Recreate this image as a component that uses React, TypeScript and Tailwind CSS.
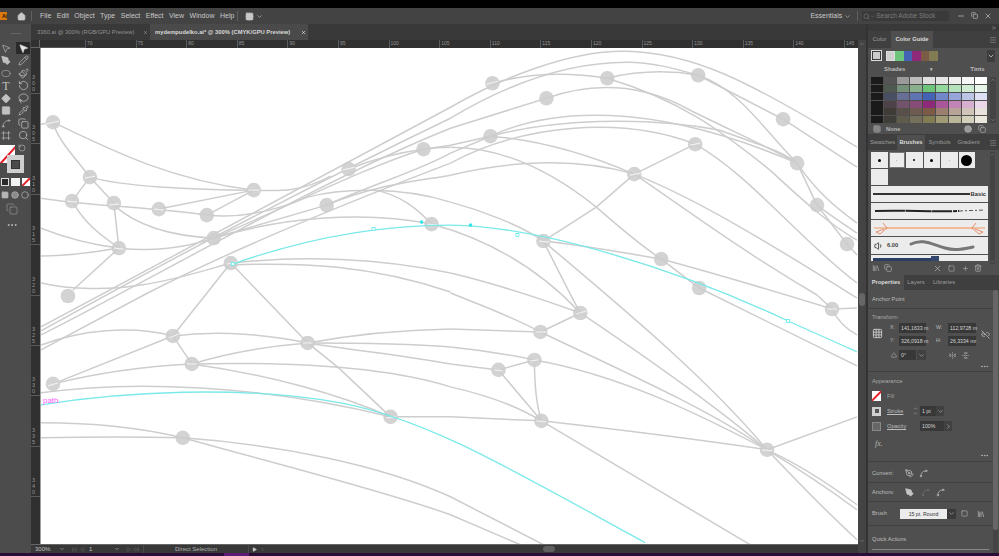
import React from 'react';
import {
  MousePointer2, PenTool, Pencil, Circle, Paintbrush, RotateCcw, Diamond, Lasso, Pipette, Spline, Copy, Frame, Search,
  Home, ChevronDown, ChevronUp, ChevronRight, Minus, X, Square, Grid2x2, Link2Off, Trash2, Plus, Library, MoreHorizontal,
  FlipHorizontal2, FlipVertical2, Triangle, SkipBack, Play, SkipForward, Volume1, Menu, ChevronsRight, Grid3x3,
} from 'lucide-react';

const menus = ['File', 'Edit', 'Object', 'Type', 'Select', 'Effect', 'View', 'Window', 'Help'];
const hRuler = ['70', '75', '80', '85', '90', '95', '100', '105', '110', '115', '120', '125', '130', '135', '140', '145'];
const vRuler = ['300', '305', '310', '315', '320', '325', '330', '335', '340'];

const tools = [
  [MousePointer2, MousePointer2],
  [PenTool, Pencil],
  [Circle, Paintbrush],
  [null, RotateCcw],
  [Diamond, Lasso],
  [Square, Pipette],
  [Spline, Copy],
  [Frame, Search],
];

const guideGrid = [
  ['#1a1a1a', '#555555', '#9a9a9a', '#bcbcbc', '#e0e0e0', '#e6e6e6', '#eeeeee', '#f6f6f6', '#ffffff'],
  ['#1a1a1a', '#4e5a50', '#75907a', '#88b18c', '#6cc57a', '#94d79d', '#b4e2ba', '#d0edd4', '#e8f6ea'],
  ['#1a1a1a', '#494f63', '#686f94', '#5f74b0', '#4463b5', '#7187c9', '#98a5d8', '#bcc5e6', '#dde1f3'],
  ['#1a1a1a', '#4c4248', '#73536c', '#874d78', '#8f2a7b', '#a9569a', '#c184b6', '#d7b0d1', '#ead7e8'],
  ['#1a1a1a', '#3f3b37', '#5a504b', '#6e5b4f', '#7b5a46', '#9b8070', '#b8a496', '#d1c4ba', '#e9e1dc'],
  ['#1a1a1a', '#3f3d37', '#5f5c4e', '#74705a', '#827c52', '#a09a75', '#bab69a', '#d3d0bc', '#eae8dc'],
];
const harmony = ['#6cc57a', '#4463b5', '#8f2a7b', '#7b5a46', '#827c52'];
const brushDots = [3, 1, 2, 3, 1, 11];

// node centres in page coordinates, the artwork svg is viewBoxed to match
const nodes = [
  [52, 122], [89, 177], [71, 201], [113, 203], [158, 209], [206, 215], [253, 190], [348, 169], [423, 149], [326, 205],
  [213, 238], [118, 248], [230, 263], [431, 224], [67, 296], [492, 83], [546, 98], [607, 78], [698, 75], [783, 119],
  [797, 163], [817, 205], [847, 244], [490, 136], [695, 144], [634, 174], [543, 241], [661, 259], [699, 288], [172, 336],
  [307, 343], [191, 364], [52, 384], [182, 438], [390, 417], [580, 313], [540, 332], [534, 360], [498, 370], [541, 421],
  [767, 450], [832, 309],
];

const edges = [
  // left cluster
  'M40,124 L52,122', 'M52,122 C110,150 170,180 253,190', 'M52,122 C57,140 72,155 89,177',
  'M89,177 C120,186 190,190 253,190', 'M89,177 L71,201', 'M89,177 L113,203',
  'M40,198 C90,206 150,207 206,215 C225,217 260,217 307,197 C340,188 400,186 450,202',
  'M158,209 L253,190', 'M206,215 L253,190', 'M253,190 C280,191 300,192 330,176',
  'M71,201 C85,225 100,235 118,248', 'M113,203 L118,248', 'M113,205 C135,225 170,236 213,238',
  'M40,228 C65,238 95,245 118,248', 'M40,256 C70,256 95,252 118,248', 'M118,248 C150,252 185,248 213,238',
  'M118,248 L72,290', 'M40,283 C70,290 110,290 140,285 C175,280 205,270 230,263',
  // bundle rising to the right
  'M40,327 L450,107 C500,78 570,50 625,51 C690,52 745,78 857,147',
  'M40,331 C150,270 300,190 450,118 C500,88 560,62 627,62 C655,62 680,70 698,75',
  'M40,335 C150,280 320,180 450,128 L546,98', 'M40,350 L143,295 C230,250 340,205 450,163',
  'M213,238 C290,205 370,165 423,149 L450,145 L490,136', 'M213,238 L326,205 C370,185 420,170 450,153 L490,136',
  'M348,169 C375,158 400,152 423,149 C435,147 445,147 450,147', 'M213,238 C280,218 360,210 431,224',
  'M373,190 C400,194 418,210 431,224', 'M326,205 C370,186 410,182 450,175', 'M450,175 C500,163 570,155 634,174',
  'M492,83 C530,72 570,72 607,78', 'M607,78 C640,70 670,70 698,75',
  // top right sweep
  'M546,98 C590,82 640,82 690,110 C730,130 765,145 797,163', 'M607,78 C680,100 720,130 770,170 C800,198 830,225 857,240',
  'M698,75 C740,90 760,125 797,163', 'M698,75 L783,119 L857,167', 'M490,136 C550,108 650,100 797,163',
  'M490,136 C550,120 640,115 720,130 C760,145 780,150 797,163', 'M490,136 C540,140 590,155 634,174',
  'M450,163 C520,125 620,115 695,144', 'M634,174 L695,144', 'M634,174 L596,207 L543,241',
  'M450,147 C500,147 550,170 596,207 C620,228 640,245 661,259', 'M695,144 C750,175 800,240 857,283',
  'M634,174 C700,200 780,250 857,298', 'M634,174 C680,205 740,250 817,295 L832,309',
  'M797,163 L817,205 L847,244', 'M797,163 C815,190 835,207 857,223', 'M817,205 C830,215 845,225 857,233',
  'M847,244 L857,255', 'M832,309 L857,308', 'M832,309 C838,322 848,330 857,335',
  'M543,241 C580,245 620,252 661,259', 'M661,259 C720,275 780,293 832,309', 'M661,259 L699,288 L857,366',
  // middle
  'M450,202 C480,210 520,225 543,241', 'M431,224 C490,240 540,270 580,313', 'M450,273 C480,280 530,295 580,313',
  'M450,293 C480,305 515,318 540,332', 'M543,241 C555,265 570,295 580,313', 'M543,241 C600,290 700,370 767,450',
  'M580,313 L540,332', 'M580,313 C650,360 720,410 767,450', 'M540,332 C620,370 710,410 767,450', 'M450,329 L540,332',
  'M450,347 C480,350 510,355 534,360', 'M450,364 L498,370', 'M498,370 L534,360', 'M534,360 C534,380 536,405 541,421',
  'M498,370 L541,421', 'M450,387 C485,395 515,405 541,421', 'M450,417 L541,421', 'M541,421 C620,430 700,440 767,450',
  'M534,360 C620,375 700,415 767,450', 'M541,421 L750,545', 'M767,450 L857,417', 'M767,450 C800,465 830,485 857,505',
  'M767,450 C800,470 830,490 857,510', 'M767,450 C800,485 830,515 857,540',
  // lower left
  'M40,345 C80,330 130,325 172,336', 'M52,384 L172,336', 'M172,336 L230,263', 'M172,336 L191,364',
  'M172,336 C220,330 270,335 307,343', 'M191,364 C230,352 270,346 307,343', 'M230,263 L307,343 L338,368 L390,417',
  'M52,384 C100,372 150,366 191,364', 'M40,393 C130,380 260,385 390,417', 'M191,364 C280,362 380,365 450,387',
  'M191,364 C270,375 340,395 390,417', 'M307,343 C350,335 400,330 450,329', 'M307,343 C350,343 400,343 450,347',
  'M307,343 C350,350 400,355 450,364', 'M390,417 L450,417', 'M232,263 C300,255 380,258 450,273',
  'M232,265 C300,262 370,265 450,292', 'M40,423 C90,423 140,428 182,438', 'M40,438 C90,437 140,437 182,438',
  'M182,438 C280,445 380,465 450,497 L543,545', 'M182,438 C260,460 380,490 450,515 L520,545',
];

// faint bright slivers where strokes pass through a node
const glints = [
  'M44,124 L58,121', 'M84,178 L94,176', 'M66,201 L76,202', 'M108,205 L118,204', 'M153,209 L163,210', 'M247,190 L259,190',
  'M342,170 L354,167', 'M113,248 L123,249', 'M226,264 L236,262', 'M427,224 L437,225', 'M486,84 L498,81', 'M630,175 L640,173',
  'M690,145 L700,143', 'M539,241 L549,242', 'M168,338 L178,334', 'M302,343 L312,343', 'M186,364 L196,364', 'M47,386 L57,383',
  'M386,418 L396,417', 'M576,314 L586,311', 'M535,332 L546,332', 'M530,361 L538,360', 'M494,370 L502,371', 'M536,421 L546,422',
  'M762,450 L772,451', 'M827,309 L837,309',
];

const Artwork = () => (
  <svg className="w-full h-full block" viewBox="40 48 818 496">
    {nodes.map(([x, y]) => (
      <circle key={`${x}-${y}`} cx={x} cy={y} r={7.3} fill="#d3d3d3" />
    ))}
    {edges.map((d) => (
      <path key={d} d={d} fill="none" stroke="#cdcdcd" strokeWidth={1.5} />
    ))}
    {glints.map((d) => (
      <path key={d} d={d} fill="none" stroke="#f0f0f0" strokeWidth={1.2} />
    ))}
    <path d="M232,264 C300,240 370,225 450,225 C540,226 680,270 788,321 C815,333 835,342 857,352" fill="none" stroke="#7be9e9" strokeWidth={1.3} />
    <path d="M40,405 C120,392 240,385 340,403 C430,420 520,475 645,543" fill="none" stroke="#7be9e9" strokeWidth={1.3} />
    {[[232, 264], [373, 229], [517, 235], [788, 321]].map(([x, y]) => (
      <rect key={x} x={x - 1.5} y={y - 1.5} width={3} height={3} fill="#fff" stroke="#5fe9e9" strokeWidth={0.8} />
    ))}
    <circle cx={421} cy={222} r={1.8} fill="#35e6e6" />
    <circle cx={470} cy={225} r={1.8} fill="#35e6e6" />
    <text x={42} y={403} fontSize={8} fill="#ff5cff" fontFamily="Liberation Sans, sans-serif">path</text>
  </svg>
);

const PanelTab = ({ label, active, w }: { label: string; active?: boolean; w: string }) => (
  <div className={`${w} h-full flex items-center justify-center text-[5.8px] ${active ? 'bg-[#4f4f4f] text-[#dcdcdc] font-bold' : 'text-[#9c9c9c]'}`}>
    {label}
  </div>
);

const Field = ({ value, w }: { value: string; w: string }) => (
  <div className={`${w} h-[10px] bg-[#383838] text-[#d6d6d6] text-[5.2px] leading-[10px] pl-[2px] whitespace-nowrap`}>{value}</div>
);

const Toolbar = () => (
  <div className="w-[31px] shrink-0 bg-[#4c4c4c] flex flex-col items-center relative">
    <div className="h-[19px] w-full flex justify-center pt-[9px]">
      <div className="w-[10px] h-[1px] bg-[#666666]" />
    </div>
    <div className="flex flex-col gap-[2.5px] w-full">
      {tools.map(([Left, Right], i) => (
        <div key={i} className="flex h-[10px] pl-[1px] gap-[5px] items-center">
          <div className="w-[10px] flex justify-center text-[#c0c0c0]">
            {Left ? (
              <Left size={11} strokeWidth={1.5} fill={i === 1 || i === 4 || i === 5 ? '#c0c0c0' : 'none'} className={i === 2 ? 'scale-y-75' : ''} />
            ) : (
              <span className="text-[12px] leading-[10px] font-['Liberation_Serif',serif]">T</span>
            )}
          </div>
          <div className={`w-[14px] h-[12px] flex justify-center items-center text-[#c8c8c8] ${i === 0 ? 'bg-[#2a2a2a] rounded-[1px]' : ''}`}>
            <Right size={11} strokeWidth={1.5} fill={i === 0 ? '#e8e8e8' : 'none'} />
          </div>
        </div>
      ))}
    </div>
    <div className="absolute left-0 top-[121px] w-[15px] h-[18px] bg-white overflow-hidden">
      <div className="absolute left-[-4px] top-[8px] w-[26px] h-[1.5px] bg-[#e8202a] -rotate-[48deg]" />
    </div>
    <div className="absolute left-[7px] top-[131px] w-[17px] h-[18px] bg-[#cfcfcf] flex items-center justify-center">
      <div className="w-[9px] h-[9px] bg-[#4c4c4c] border border-[#333]" />
    </div>
    <div className="absolute left-[18px] top-[120px] text-[#c8c8c8]">
      <RotateCcw size={8} strokeWidth={1.6} />
    </div>
    <div className="absolute left-[1px] top-[154px] flex gap-[1px]">
      <div className="w-[8px] h-[8px] bg-[#2b2b2b] border border-[#ddd]" />
      <div className="w-[9px] h-[8px] bg-[#f2f2f2] ml-[1px]" />
      <div className="w-[8px] h-[8px] bg-white relative overflow-hidden ml-[1px]">
        <div className="absolute left-[-2px] top-[3px] w-[12px] h-[1.5px] bg-[#e8202a] -rotate-45" />
      </div>
    </div>
    <div className="absolute left-[1px] top-[167px] flex gap-[2px] text-[#b5b5b5]">
      <Square size={8} fill="#b5b5b5" />
      <Circle size={8} fill="#8a8a8a" />
      <Circle size={8} />
    </div>
    <div className="absolute left-[6px] top-[179px] text-[#a0a0a0]">
      <Copy size={12} strokeWidth={1.2} />
    </div>
    <div className="absolute left-[6px] top-[195px] text-[#bcbcbc]">
      <MoreHorizontal size={12} />
    </div>
  </div>
);

const RightPanel = () => (
  <div className="w-[133px] shrink-0 flex bg-[#3d3d3d]">
    <div className="w-[2px] bg-[#333333]" />
    <div className="w-[131px] flex flex-col text-[#b8b8b8]">
      {/* dock header */}
      <div className="h-[7px] bg-[#393939] flex justify-end items-center pr-[2px] text-[#b0b0b0]">
        <ChevronsRight size={6} />
      </div>

      {/* colour guide */}
      <div className="h-[17px] flex items-center bg-[#3f3f3f]">
        <PanelTab label="Color" w="w-[23px]" />
        <PanelTab label="Color Guide" active w="w-[42px]" />
        <div className="flex-1 flex justify-end pr-[2px] text-[#8c8c8c]"><Menu size={8} /></div>
      </div>
      <div className="h-[86px] bg-[#4f4f4f] px-[3px] flex flex-col">
        <div className="flex items-center gap-[4px] h-[14px] mt-[1px]">
          <div className="w-[11px] h-[11px] border border-[#ddd] bg-[#3d3d3d] flex items-center justify-center">
            <div className="w-[7px] h-[7px] bg-[#ccc]" />
          </div>
          <div className="flex h-[10px] rounded-[2px] bg-[#3d3d3d]">
            <div className="w-[9px] border border-[#ddd] bg-[#cfcfcf]" />
            {harmony.map((c) => (
              <div key={c} className="w-[8.5px]" style={{ background: c }} />
            ))}
          </div>
          <div className="ml-auto mr-[1px] text-[#ddd] bg-[#3d3d3d] w-[8px] h-[12px] flex items-center"><ChevronDown size={8} /></div>
        </div>
        <div className="flex h-[14px] items-center text-[6px] font-bold text-[#bcbcbc]">
          <span className="ml-[13px]">Shades</span>
          <span className="ml-[25px] text-[5px]">▾</span>
          <span className="ml-[37px]">Tints</span>
        </div>
        <div className="flex gap-[2px] mt-[1px]">
          <div className="grid grid-cols-9 w-[118px] gap-y-[0.5px]">
            {guideGrid.flat().map((c, i) => (
              <div key={i} className="h-[7.2px] mr-[1px]" style={{ background: c }} />
            ))}
          </div>
          <div className="w-[6px] h-[46px] bg-[#444444] flex flex-col justify-between items-center text-[#999]">
            <ChevronUp size={6} />
            <ChevronDown size={6} />
          </div>
        </div>
        <div className="flex items-center h-[10px] mt-[1px] text-[5.8px] text-[#b4b4b4]">
          <Grid3x3 size={8} className="ml-[2px]" />
          <span className="ml-[5px] font-bold">None</span>
          <Circle size={8} fill="#999" className="ml-[63px]" />
          <Copy size={8} className="ml-[6px]" />
        </div>
      </div>

      {/* brushes */}
      <div className="h-[15px] flex items-center bg-[#3f3f3f] mt-[1px]">
        <PanelTab label="Swatches" w="w-[29px]" />
        <PanelTab label="Brushes" active w="w-[28px]" />
        <PanelTab label="Symbols" w="w-[29px]" />
        <PanelTab label="Gradient" w="w-[29px]" />
        <div className="flex-1 flex justify-end pr-[2px] text-[#8c8c8c]"><Menu size={8} /></div>
      </div>
      <div className="h-[125px] bg-[#4f4f4f] pl-[3px] flex relative">
        <div className="flex flex-col w-[118px]">
          <div className="flex gap-[1px] mt-[2px]">
            {brushDots.map((d, i) => (
              <div key={i} className={`w-[16.5px] h-[16px] shrink-0 bg-[#ececec] flex items-center justify-center ${i === 1 ? 'outline outline-1 outline-[#777] -outline-offset-1' : ''}`}>
                <div className="rounded-full bg-black" style={{ width: d, height: d, opacity: d === 1 ? 0.3 : 1 }} />
              </div>
            ))}
          </div>
          <div className="w-[16.5px] h-[16px] bg-[#ececec] mt-[1px]" />
          <div className="w-[117px] mt-[1px] flex flex-col gap-[1px]">
            <div className="h-[16px] bg-[#ececec] flex items-center px-[2px] gap-[1px]">
              <div className="flex-1 h-[1.5px] bg-[#333]" />
              <span className="text-[5.8px] text-[#333] font-bold">Basic</span>
            </div>
            <div className="h-[16px] bg-[#ececec] flex items-center">
              <svg width="117" height="16"><path d="M4,8 C30,7 60,9 88,8" stroke="#222" strokeWidth="2" strokeDasharray="30 0.5 26 0.5 20 1 4 1" fill="none" /><path d="M88,8 L114,7" stroke="#555" strokeWidth="1" strokeDasharray="4 2 2 2" fill="none" /></svg>
            </div>
            <div className="h-[16px] bg-[#ececec]">
              <svg width="117" height="16"><path d="M3,8 L114,8" stroke="#eb9a63" strokeWidth="1" fill="none" /><path d="M16,8 L102,8" stroke="#f3b996" strokeWidth="2.2" fill="none" /><path d="M12,3 L16,8 L9,14 L5,12 L13,9 M105,3 L101,8 L108,14 L112,12 L104,9" stroke="#e8764a" strokeWidth="0.8" fill="none" /></svg>
            </div>
            <div className="h-[17px] bg-[#ececec] flex items-center pl-[3px] text-[#333]">
              <Volume1 size={10} />
              <span className="text-[5.8px] font-bold ml-[3px] text-[#444]">6.00</span>
              <svg width="70" height="16" className="ml-[9px]"><path d="M4,6 C16,0 26,7 38,10 C48,13 56,11 66,9" stroke="#777" strokeWidth="3" strokeLinecap="round" fill="none" /></svg>
            </div>
            <div className="h-[6px] bg-[#ececec] flex items-end">
              <div className="w-[58px] h-[3px] ml-[2px] bg-[#2c3f63]" />
              <div className="w-[8px] h-[5px] bg-[#33476d]" />
            </div>
          </div>
          <div className="flex items-center h-[10px] mt-[2px] text-[#b0b0b0]">
            <Library size={8} className="ml-[1px]" />
            <Copy size={8} className="ml-[4px]" />
            <X size={9} className="ml-[41px]" />
            <Square size={7} className="ml-[6px]" />
            <Plus size={7} className="ml-[7px]" />
            <Trash2 size={8} className="ml-[5px]" />
          </div>
        </div>
        <div className="w-[5px] h-[112px] mt-[2px] ml-[1px] bg-[#444444] flex flex-col items-center justify-between text-[#999]">
          <ChevronUp size={5} />
          <ChevronDown size={5} />
        </div>
      </div>

      {/* properties */}
      <div className="h-[15px] flex items-center bg-[#3f3f3f]">
        <PanelTab label="Properties" active w="w-[36px]" />
        <PanelTab label="Layers" w="w-[24px]" />
        <PanelTab label="Libraries" w="w-[32px]" />
      </div>
      <div className="flex-1 bg-[#4f4f4f] flex relative overflow-hidden">
        <div className="flex-1 flex flex-col text-[5.7px] text-[#bcbcbc]">
          <div className="h-[19px] flex items-center pl-[4px] border-b border-[#414141]">Anchor Point</div>
          <div className="h-[63px] border-b border-[#414141] px-[4px] relative">
            <div className="pt-[4px] h-[14px] text-[#a8a8a8]">Transform</div>
            <div className="flex">
              <div className="w-[11px] h-[11px] mt-[5px] text-[#ccc]"><Grid3x3 size={11} /></div>
              <div className="ml-[7px] flex flex-col gap-[3px]">
                <div className="flex items-center gap-[1px]"><span className="w-[8px] text-[5.2px]">X:</span><Field value="141,1633 m" w="w-[27px]" /><span className="w-[11px] ml-[9px] text-[5.2px]">W:</span><Field value="112,9728 m" w="w-[28px]" /></div>
                <div className="flex items-center gap-[1px]"><span className="w-[8px] text-[5.2px]">Y:</span><Field value="326,0918 m" w="w-[27px]" /><span className="w-[11px] ml-[9px] text-[5.2px]">H:</span><Field value="26,3334 mr" w="w-[28px]" /></div>
                <div className="flex items-center gap-[1px] mt-[1px]">
                  <Triangle size={6} className="ml-[1px] mr-[1px]" /><Field value="0°" w="w-[17px]" />
                  <div className="w-[9px] h-[10px] bg-[#414141] flex items-center justify-center"><ChevronDown size={7} /></div>
                  <FlipHorizontal2 size={7} className="ml-[22px]" /><FlipVertical2 size={7} className="ml-[5px]" />
                </div>
              </div>
            </div>
            <Link2Off size={9} className="absolute left-[113px] top-[21px]" />
            <MoreHorizontal size={9} className="absolute left-[112px] top-[53px]" />
          </div>
          <div className="h-[90px] border-b border-[#414141] px-[4px] relative">
            <div className="pt-[5px] h-[14px] text-[#a8a8a8]">Appearance</div>
            <div className="flex items-center h-[10px] mt-[5px]">
              <div className="w-[9px] h-[10px] bg-white relative overflow-hidden"><div className="absolute left-[-3px] top-[4px] w-[15px] h-[1.5px] bg-[#e8202a] -rotate-45" /></div>
              <span className="ml-[6px] text-[#a0a0a0]">Fill</span>
            </div>
            <div className="flex items-center h-[10px] mt-[5px]">
              <div className="w-[9px] h-[9px] bg-[#cfcfcf] flex items-center justify-center"><div className="w-[4px] h-[4px] bg-[#555]" /></div>
              <span className="ml-[6px] w-[22px] underline">Stroke</span>
              <span className="ml-[4px] text-[#ccc]"><ChevronUp size={5} /><ChevronDown size={5} /></span>
              <div className="ml-[2px]"><Field value="1 pt" w="w-[16px]" /></div>
              <div className="w-[8px] h-[10px] bg-[#414141] flex items-center justify-center"><ChevronDown size={7} /></div>
            </div>
            <div className="flex items-center h-[10px] mt-[5px]">
              <div className="w-[9px] h-[9px] border border-[#888] bg-[#666]" />
              <span className="ml-[6px] w-[22px] underline">Opacity</span>
              <div className="ml-[11px]"><Field value="100%" w="w-[24px]" /></div>
              <div className="w-[8px] h-[10px] bg-[#414141] flex items-center justify-center"><ChevronRight size={7} /></div>
            </div>
            <div className="mt-[7px] ml-[3px] italic text-[8px] text-[#b4b4b4] font-['Liberation_Serif',serif]">fx.</div>
            <MoreHorizontal size={9} className="absolute left-[112px] top-[79px]" />
          </div>
          <div className="h-[21px] border-b border-[#414141] pl-[4px] pt-[2px] flex items-center">
            <span className="w-[33px]">Convert:</span>
            <PenTool size={9} />
            <Spline size={9} className="ml-[5px]" />
          </div>
          <div className="h-[19px] border-b border-[#414141] pl-[4px] flex items-center">
            <span className="w-[33px]">Anchors:</span>
            <PenTool size={9} fill="#ccc" />
            <Spline size={9} className="ml-[7px] opacity-30" />
            <Spline size={9} className="ml-[6px]" />
          </div>
          <div className="h-[24px] border-b border-[#414141] pl-[4px] flex items-center">
            <span className="w-[28px]">Brush</span>
            <div className="w-[47px] h-[10px] bg-[#ececec] text-[#333] text-[5.2px] leading-[10px] text-center">15 pt. Round</div>
            <div className="w-[9px] h-[10px] bg-[#3a3a3a] flex items-center justify-center"><ChevronDown size={7} /></div>
            <Square size={7} className="ml-[5px]" />
            <Library size={8} className="ml-[9px]" />
          </div>
          <div className="h-[23px] pl-[4px] pt-[3px] flex items-center">Quick Actions</div>
          <div className="mx-[4px] h-[3px] border-t border-[#888]" />
        </div>
        <div className="w-[5px] mr-[1px] bg-[#444444]"><div className="w-full h-[240px] bg-[#666666] rounded-[2px]" /></div>
      </div>
    </div>
  </div>
);

export default function App() {
  return (
    <div className="w-[999px] h-[556px] overflow-hidden bg-black flex flex-col font-['Liberation_Sans',sans-serif]">
      <div className="h-2 bg-black shrink-0" />

      {/* menu bar */}
      <div className="h-4 shrink-0 bg-[#434343] flex items-center text-[7px] text-[#c8c8c8] whitespace-nowrap">
        <div className="w-[7px] h-[8px] bg-[#d9790f] text-[#2b1600] text-[5px] leading-[8px] font-bold text-right overflow-hidden">Ai</div>
        <Home size={9} fill="#c8c8c8" className="ml-[10px]" />
        <div className="w-[1px] h-[10px] bg-[#5f5f5f] ml-[5px]" />
        <div className="flex gap-[5.5px] ml-[8px]">
          {menus.map((m) => <span key={m}>{m}</span>)}
        </div>
        <div className="w-[1px] h-[10px] bg-[#5f5f5f] ml-[3px]" />
        <Grid2x2 size={9} className="ml-[7px]" fill="#c8c8c8" />
        <ChevronDown size={7} className="ml-[2px]" />
        <span className="ml-[547px]">Essentials</span>
        <ChevronDown size={7} className="ml-[2px]" />
        <div className="w-[1px] h-[10px] bg-[#5f5f5f] ml-[6px]" />
        <div className="ml-[4px] w-[87px] h-[10px] bg-[#3a3a3a] flex items-center text-[#7d7d7d]">
          <Search size={7} className="ml-[1px]" />
          <ChevronDown size={5} />
          <span className="ml-[1px] text-[6.5px]">Search Adobe Stock</span>
        </div>
        <div className="ml-[4px] w-[43px] flex text-[#c8c8c8] justify-between px-[4px]">
          <Minus size={8} /><Copy size={7} /><X size={8} />
        </div>
      </div>

      <div className="flex-1 flex min-h-0">
        <Toolbar />

        <div className="w-[835px] shrink-0 flex flex-col">
          {/* document tabs */}
          <div className="h-4 shrink-0 bg-[#393939] flex text-[5.8px] whitespace-nowrap">
            <div className="w-[119px] flex items-center pl-[6px] text-[#929292] relative">
              3360.ai @ 300% (RGB/GPU Preview)
              <X size={5} className="absolute left-[112px] top-[6px] text-[#bbb]" />
            </div>
            <div className="w-[158px] bg-[#4a4a4a] flex items-center pl-[5px] text-[#d8d8d8] font-bold relative">
              mydempudelko.ai* @ 300% (CMYK/GPU Preview)
              <X size={5} className="absolute left-[151px] top-[6px] text-[#eee]" strokeWidth={3} />
            </div>
          </div>

          <div className="flex-1 flex min-h-0">
            <div className="w-[827px] flex flex-col">
              {/* horizontal ruler */}
              <div className="h-2 shrink-0 bg-[#303030] flex text-[5px] leading-[6px] text-[#949494] overflow-hidden">
                <div className="w-[9px] shrink-0 border-r border-b border-[#666]" />
                <div className="w-[45px] shrink-0 border-b border-[#555]" />
                {hRuler.map((r) => (
                  <div key={r} className="w-[50.6px] shrink-0 border-l border-[#5a5a5a] pl-[1px]">{r}</div>
                ))}
              </div>
              <div className="flex-1 flex min-h-0">
                {/* vertical ruler */}
                <div className="w-[9px] shrink-0 bg-[#303030] flex flex-col text-[5.5px] leading-[6px] text-[#949494] overflow-hidden">
                  {vRuler.map((r) => (
                    <div key={r} className="h-[50.4px] first:h-[46px] shrink-0 border-b border-[#5a5a5a] flex flex-col items-start pl-[1px] justify-end pb-[1px]">
                      {r.split('').map((d, i) => <span key={i}>{d}</span>)}
                    </div>
                  ))}
                </div>
                <div className="flex-1 bg-white min-w-0 overflow-hidden border-l border-[#a0a0a0]">
                  <Artwork />
                </div>
              </div>
              {/* status bar */}
              <div className="h-[9px] shrink-0 bg-[#383838] flex items-center text-[6px] text-[#c0c0c0] border-t border-[#666]">
                <span className="ml-[4px] w-[24px]">300%</span>
                <ChevronDown size={6} />
                <SkipBack size={5} className="ml-[7px] text-[#777]" />
                <Play size={5} className="ml-[3px] rotate-180 text-[#777]" />
                <div className="w-[25px] ml-[4px]">1</div>
                <ChevronDown size={6} />
                <Play size={5} className="ml-[6px] text-[#777]" />
                <SkipForward size={5} className="ml-[3px] text-[#777]" />
                <div className="w-[106px] ml-[4px] text-center text-[#b0b0b0] border-l border-r border-[#4a4a4a]">Direct Selection</div>
                <Play size={5} fill="#ccc" className="ml-[3px]" />
                <ChevronRight size={5} className="ml-[3px] rotate-180 text-[#888]" />
                <div className="flex-1 flex justify-center">
                  <div className="w-[12px] h-[6px] rounded-[3px] bg-[#5f5f5f] mr-[25px]" />
                </div>
              </div>
            </div>
            {/* canvas scrollbar */}
            <div className="w-[8px] shrink-0 bg-[#444444] flex flex-col items-center text-[#999]">
              <ChevronUp size={6} className="mt-[1px]" />
              <div className="w-[6px] h-[13px] mt-[246px] bg-[#666666] rounded-[3px]" />
              <ChevronDown size={6} className="mt-auto mb-[9px]" />
            </div>
          </div>
        </div>

        <RightPanel />
      </div>

      {/* desktop strip below the app window */}
      <div className="h-[3px] shrink-0 bg-[#2a0d36] flex">
        <div className="w-[224px]" />
        <div className="w-[25px] bg-[#5b1a74]" />
      </div>
    </div>
  );
}
